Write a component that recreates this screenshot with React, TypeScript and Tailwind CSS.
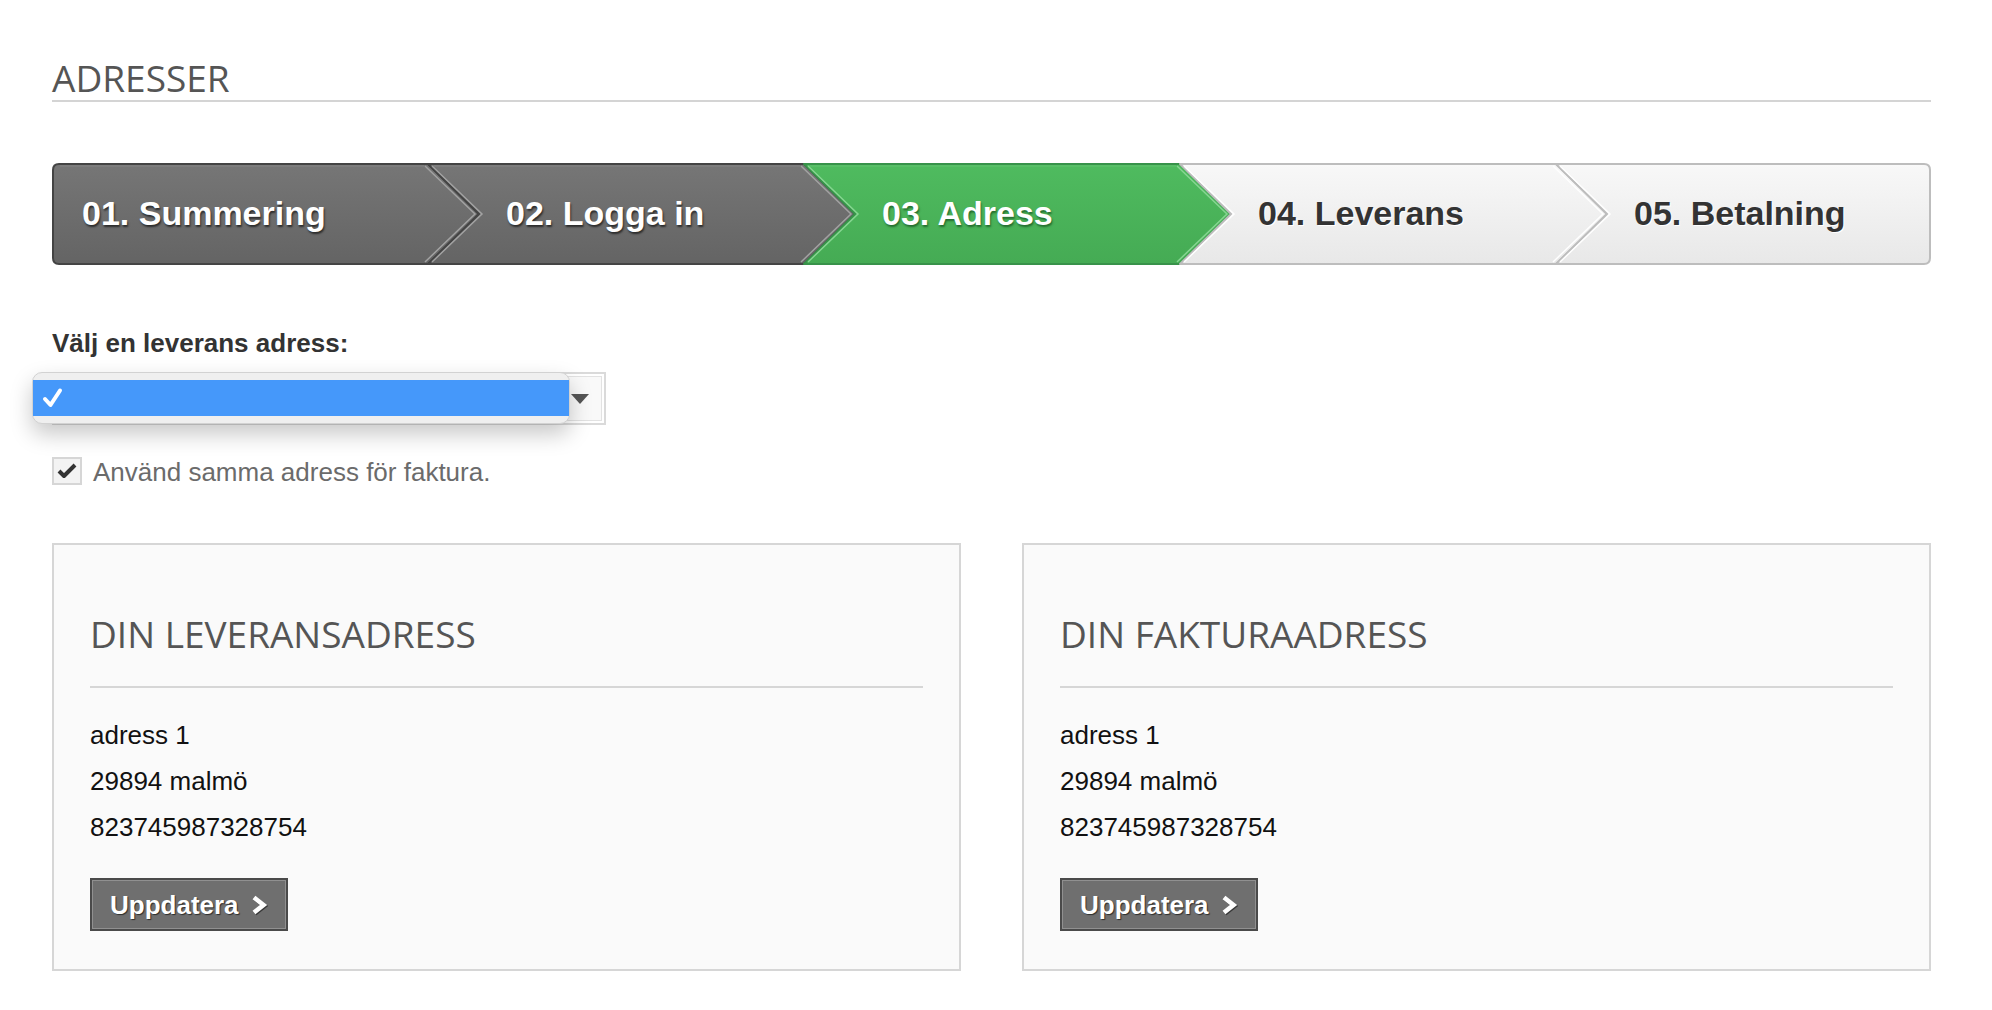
type Tone = 'dark' | 'green' | 'light'

const steps: { label: string; tone: Tone }[] = [
  { label: '01. Summering', tone: 'dark' },
  { label: '02. Logga in', tone: 'dark' },
  { label: '03. Adress', tone: 'green' },
  { label: '04. Leverans', tone: 'light' },
  { label: '05. Betalning', tone: 'light' },
]

const tones = {
  dark: {
    top: '#767676',
    bottom: '#646464',
    border: '#444444',
    hi: '#a2a2a2',
    text: 'text-white [text-shadow:1px_2px_2px_rgba(0,0,0,0.6)]',
  },
  green: {
    top: '#4fbb5f',
    bottom: '#45ab54',
    border: '#38924a',
    hi: '#86d691',
    text: 'text-white [text-shadow:1px_2px_2px_rgba(20,80,30,0.7)]',
  },
  light: {
    top: '#f8f8f8',
    bottom: '#e8e8e8',
    border: '#bdbdbd',
    hi: '#ffffff',
    text: 'text-[#333333] [text-shadow:1px_1px_0_#ffffff]',
  },
}

function StepShape({ i, tone, first, last }: { i: number; tone: Tone; first: boolean; last: boolean }) {
  const c = tones[tone]
  let d = 'M0,1 L376,1 L427,51 L376,101 L0,101 L51,51 Z'
  if (first) d = 'M7,1 L376,1 L427,51 L376,101 L7,101 Q1,101 1,95 L1,7 Q1,1 7,1 Z'
  if (last) d = 'M0,1 L368,1 Q374,1 374,7 L374,95 Q374,101 368,101 L0,101 L51,51 Z'
  return (
    <svg className="absolute left-0 top-0 overflow-visible" width={last ? 375 : 427} height={102}>
      <defs>
        <linearGradient id={`step-g-${i}`} x1="0" y1="0" x2="0" y2="1">
          <stop offset="0" stopColor={c.top} />
          <stop offset="1" stopColor={c.bottom} />
        </linearGradient>
      </defs>
      <path d={d} fill={`url(#step-g-${i})`} stroke={c.border} strokeWidth={2} strokeLinejoin="round" />
      {!last && <polyline points="373,3 423,51 373,99" fill="none" stroke={c.hi} strokeWidth={1.5} />}
      {!first && <polyline points="4,3 54,51 4,99" fill="none" stroke={c.hi} strokeWidth={1.5} />}
      <line x1={first ? 8 : 6} y1={3} x2={last ? 366 : 372} y2={3} stroke={c.hi} strokeOpacity={0.35} strokeWidth={1} />
    </svg>
  )
}

function Stepper() {
  return (
    <div className="mt-[61px] flex h-[102px] w-[1879px]">
      {steps.map((s, i) => {
        const first = i === 0
        const last = i === steps.length - 1
        return (
          <div key={s.label} className={`relative h-full ${last ? 'w-[375px]' : 'w-[376px]'}`}>
            <StepShape i={i} tone={s.tone} first={first} last={last} />
            <div
              className={`relative z-10 flex h-full items-center pb-[2px] text-[34px] font-bold ${tones[s.tone].text} ${first ? 'pl-[30px]' : 'pl-[78px]'}`}
            >
              {s.label}
            </div>
          </div>
        )
      })}
    </div>
  )
}

function AddressCard({ title }: { title: string }) {
  return (
    <div className="border-2 border-[#d6d6d6] bg-[#fafafa] px-[36px] pt-[64px] pb-[38px]">
      <h2 className="font-['Open_Sans',sans-serif] text-[37px] leading-[49px] text-[#555555]">{title}</h2>
      <div className="mt-[28px] h-[2px] bg-[#d6d6d6]" />
      <div className="mt-[24px] text-[26px] leading-[46px] text-[#111111]">
        <div>adress 1</div>
        <div>29894 malmö</div>
        <div>823745987328754</div>
      </div>
      <button className="mt-[28px] flex h-[53px] w-[198px] items-center gap-[12px] border-2 border-[#4a4a4a] bg-[#6f6f6f] pl-[18px] text-[26px] font-bold text-white shadow-[inset_0_0_0_1px_#909090] [text-shadow:1px_1px_1px_rgba(0,0,0,0.6)]">
        <span className="pt-[1px]">Uppdatera</span>
        <svg width="17" height="20" viewBox="0 0 17 20" className="drop-shadow-[1px_1px_0_rgba(0,0,0,0.5)]">
          <polyline points="3,2.5 12.5,10 3,17.5" fill="none" stroke="#ffffff" strokeWidth={4.6} strokeLinejoin="miter" />
        </svg>
      </button>
    </div>
  )
}

export default function App() {
  return (
    <div className="min-h-screen bg-white pl-[52px] pr-[61px] pt-[56px] font-['Liberation_Sans',Arial,sans-serif]">
      <h1 className="border-b-2 border-[#d4d4d4] font-['Open_Sans',sans-serif] text-[37px] leading-[44px] text-[#555555]">
        ADRESSER
      </h1>

      <Stepper />

      <div className="mt-[63px] text-[26px] font-bold leading-[30px] text-[#333333]">Välj en leverans adress:</div>

      <div className="relative mt-[14px] h-[53px] w-[554px]">
        <div className="h-full w-full border-2 border-[#dadada] bg-white p-[2px]">
          <div className="flex h-full w-full items-center justify-end border border-[#e2e2e2] bg-[#f9f9f9] pr-[12px]">
            <svg width="18" height="10" viewBox="0 0 18 10">
              <polygon points="0,0 18,0 9,10" fill="#555555" />
            </svg>
          </div>
        </div>
        <div className="absolute left-[-20px] top-0 h-[52px] w-[538px] rounded-[10px] border border-[#d2d2d2] bg-[#efefef] shadow-[0_10px_22px_rgba(0,0,0,0.22)]">
          <div className="mt-[7px] flex h-[36px] items-center bg-[#4598fa] pl-[9px]">
            <svg width="22" height="22" viewBox="0 0 22 22">
              <path d="M3 12 L8.5 18 L18 3.5" fill="none" stroke="#ffffff" strokeWidth={4} strokeLinecap="round" strokeLinejoin="round" />
            </svg>
          </div>
        </div>
      </div>

      <label className="mt-[32px] flex items-start gap-[11px] text-[26px] leading-[30px] text-[#6b6b6b]">
        <span className="flex h-[28px] w-[30px] items-center justify-center border-2 border-[#d6d6d6] bg-[#f3f3f3]">
          <svg width="20" height="16" viewBox="0 0 20 16">
            <path d="M2 8 L7 13 L18 2" fill="none" stroke="#333333" strokeWidth={4} strokeLinejoin="round" />
          </svg>
        </span>
        <span>Använd samma adress för faktura.</span>
      </label>

      <div className="mt-[56px] grid grid-cols-2 gap-[61px]">
        <AddressCard title="DIN LEVERANSADRESS" />
        <AddressCard title="DIN FAKTURAADRESS" />
      </div>
    </div>
  )
}
